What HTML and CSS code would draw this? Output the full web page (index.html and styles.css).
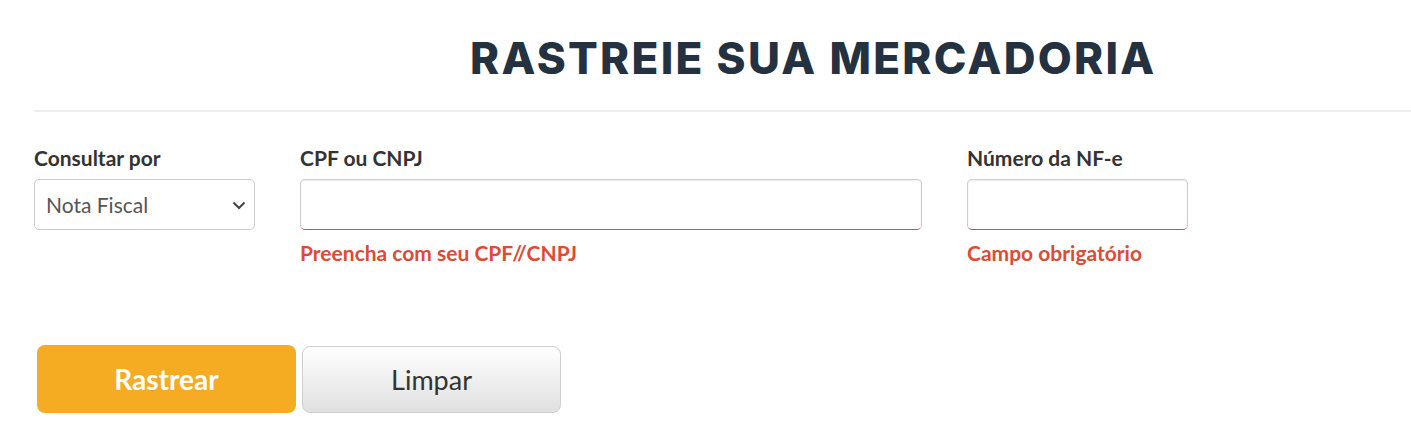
FILE: index.html
```html
<!DOCTYPE html>
<html lang="pt-BR">
<head>
<meta charset="utf-8">
<title>Rastreie sua mercadoria</title>
<link rel="stylesheet" href="styles.css">
</head>
<body>
<main class="page">
  <header class="head">
    <h1 class="title">RASTREIE SUA MERCADORIA</h1>
  </header>
  <form class="form">
    <div class="fields">
      <div class="field field-sm">
        <label class="label">Consultar por</label>
        <div class="select">
          <span class="select-value">Nota Fiscal</span>
          <svg class="chev" width="14" height="9" viewBox="0 0 14 9"><path d="M1.5 1.5 L7 7 L12.5 1.5" fill="none" stroke="#444" stroke-width="2"/></svg>
        </div>
      </div>
      <div class="field field-lg">
        <label class="label">CPF ou CNPJ</label>
        <div class="input invalid"></div>
        <div class="error">Preencha com seu CPF//CNPJ</div>
      </div>
      <div class="field field-sm">
        <label class="label">Número da NF-e</label>
        <div class="input invalid"></div>
        <div class="error">Campo obrigatório</div>
      </div>
    </div>
    <div class="actions">
      <button type="button" class="btn btn-primary">Rastrear</button>
      <button type="button" class="btn btn-default">Limpar</button>
    </div>
  </form>
</main>
</body>
</html>
```
FILE: styles.css
```css
html, body {
  margin: 0;
  padding: 0;
  background: #fff;
  overflow: hidden;
}
body {
  font-family: Lato, "Open Sans", sans-serif;
  color: #333;
}
.page {
  padding-left: 34px;
}
.head {
  border-bottom: 2px solid #eeeeee;
  height: 112px;
  box-sizing: border-box;
  padding-top: 30px;
  padding-left: 436px;
}
.title {
  margin: 0;
  font-family: Inter, "Open Sans", sans-serif;
  font-weight: 800;
  font-size: 44px;
  line-height: 56px;
  letter-spacing: 2.3px;
  color: #233140;
  white-space: nowrap;
}
.form {
  padding-top: 33px;
}
.fields {
  display: flex;
  gap: 45px;
  height: 200px;
}
.field-sm { width: 221px; }
.field-lg { width: 622px; }
.label {
  display: block;
  font-weight: 700;
  font-size: 21px;
  line-height: 26px;
  height: 34px;
  color: #333;
}
.select, .input {
  box-sizing: border-box;
  height: 51px;
  border: 1px solid #cccccc;
  border-radius: 5px;
  background: #fff;
}
.select {
  display: flex;
  align-items: center;
  justify-content: space-between;
  padding: 0 8px 0 11px;
}
.select-value {
  font-size: 21px;
  color: #555;
}
.chev { margin-top: 1px; }
.input {
  box-shadow: inset 0 1px 2px rgba(0,0,0,0.08);
}
.input.invalid {
  border-bottom-color: #e04a36;
}
.error {
  margin-top: 10px;
  font-weight: 700;
  font-size: 21px;
  line-height: 26px;
  color: #e04a35;
}
.actions {
  display: flex;
  gap: 6px;
  padding-left: 3px;
  align-items: flex-start;
}
.btn {
  width: 259px;
  font-family: Lato, "Open Sans", sans-serif;
  border-radius: 8px;
  cursor: pointer;
}
.btn-primary {
  height: 68px;
  border: none;
  background: #f5ac23;
  color: #fff;
  font-weight: 700;
  font-size: 28px;
}
.btn-default {
  height: 67px;
  margin-top: 1px;
  border: 1px solid #cfcfcf;
  background: linear-gradient(#ffffff, #e0e0e0);
  color: #333;
  font-weight: 400;
  font-size: 27px;
}
```
